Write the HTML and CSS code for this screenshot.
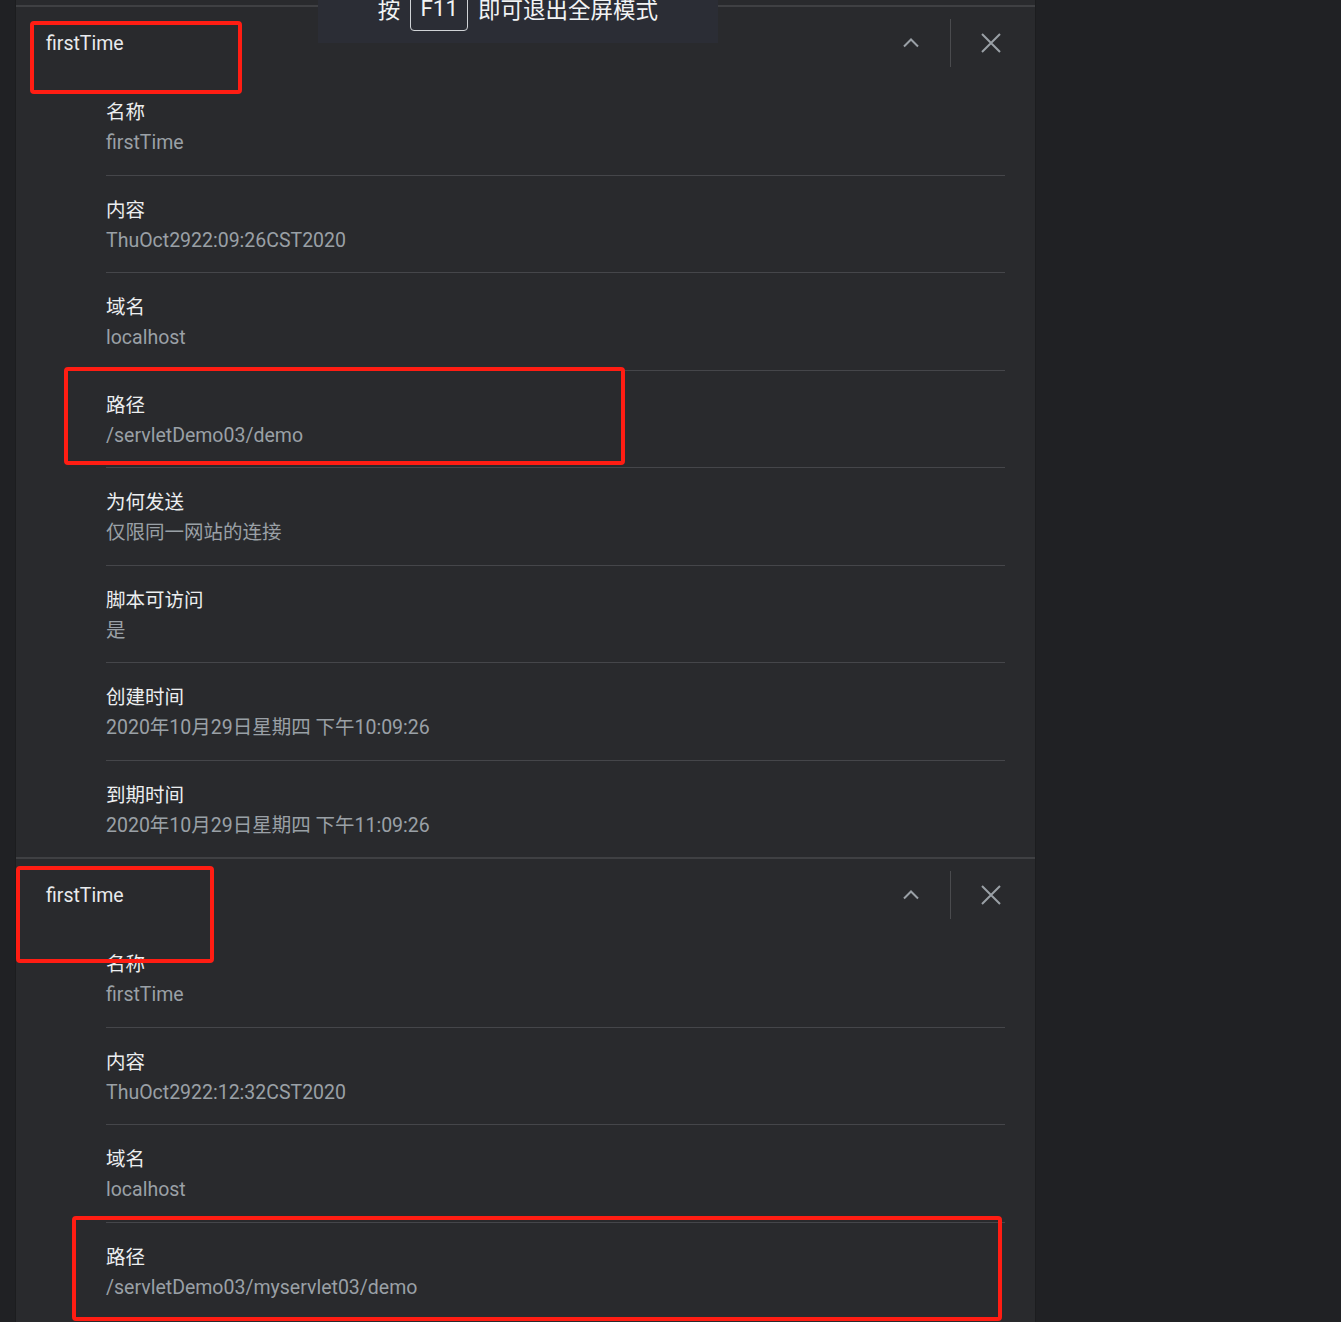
FILE: index.html
```html
<!DOCTYPE html>
<html lang="zh-CN">
<head>
<meta charset="utf-8">
<title>Cookies</title>
<link rel="stylesheet" href="styles.css">
</head>
<body>
<div class="panel">
  <section class="card">
    <div class="card-head">
      <span class="card-title">firstTime</span>
      <button class="icon-btn" aria-label="收起">
        <svg width="16" height="16" viewBox="0 0 16 16"><path d="M1 11.5 L8 4.5 L15 11.5" fill="none" stroke="#9aa0a6" stroke-width="2"/></svg>
      </button>
      <span class="head-divider"></span>
      <button class="icon-btn close" aria-label="删除">
        <svg width="20" height="20" viewBox="0 0 20 20"><path d="M1 1 L19 19 M19 1 L1 19" fill="none" stroke="#9aa0a6" stroke-width="2"/></svg>
      </button>
    </div>
    <div class="row"><div class="label">名称</div><div class="value">firstTime</div></div>
    <div class="row"><div class="label">内容</div><div class="value">ThuOct2922:09:26CST2020</div></div>
    <div class="row"><div class="label">域名</div><div class="value">localhost</div></div>
    <div class="row"><div class="label">路径</div><div class="value">/servletDemo03/demo</div></div>
    <div class="row"><div class="label">为何发送</div><div class="value">仅限同一网站的连接</div></div>
    <div class="row"><div class="label">脚本可访问</div><div class="value">是</div></div>
    <div class="row"><div class="label">创建时间</div><div class="value">2020年10月29日星期四 下午10:09:26</div></div>
    <div class="row"><div class="label">到期时间</div><div class="value">2020年10月29日星期四 下午11:09:26</div></div>
  </section>
  <section class="card">
    <div class="card-head">
      <span class="card-title">firstTime</span>
      <button class="icon-btn" aria-label="收起">
        <svg width="16" height="16" viewBox="0 0 16 16"><path d="M1 11.5 L8 4.5 L15 11.5" fill="none" stroke="#9aa0a6" stroke-width="2"/></svg>
      </button>
      <span class="head-divider"></span>
      <button class="icon-btn close" aria-label="删除">
        <svg width="20" height="20" viewBox="0 0 20 20"><path d="M1 1 L19 19 M19 1 L1 19" fill="none" stroke="#9aa0a6" stroke-width="2"/></svg>
      </button>
    </div>
    <div class="row"><div class="label">名称</div><div class="value">firstTime</div></div>
    <div class="row"><div class="label">内容</div><div class="value">ThuOct2922:12:32CST2020</div></div>
    <div class="row"><div class="label">域名</div><div class="value">localhost</div></div>
    <div class="row"><div class="label">路径</div><div class="value">/servletDemo03/myservlet03/demo</div></div>
  </section>
</div>

<div class="toast">
  <div class="toast-line">
    <span>按</span>
    <span class="kbd">F11</span>
    <span>即可退出全屏模式</span>
  </div>
</div>

<div class="mark mark-1"></div>
<div class="mark mark-2"></div>
<div class="mark mark-3"></div>
<div class="mark mark-4"></div>
</body>
</html>
```

FILE: styles.css
```css
html, body {
  margin: 0;
  height: 1322px;
  overflow: hidden;
}
body {
  background: #202124;
  font-family: Roboto, "Noto Sans CJK SC", sans-serif;
  position: relative;
}
.panel {
  margin-left: 15px;
  width: 1019px;
  min-height: 1322px;
  background: #292a2d;
  border-left: 1px solid #1c1d1f;
  border-right: 1px solid #1c1d1f;
  padding-top: 5px;
  box-sizing: content-box;
}
.card {
  border-top: 2px solid #3f4043;
}
.card-head {
  height: 48px;
  padding: 12px 24px 11px 30px;
  display: flex;
  align-items: center;
}
.card-title {
  flex: 1;
  color: #e8eaed;
  font-size: 19.5px;
}
.icon-btn {
  width: 40px;
  height: 40px;
  border: 0;
  padding: 0;
  background: transparent;
  display: flex;
  align-items: center;
  justify-content: center;
}
.icon-btn.close {
  margin-left: 20px;
}
.head-divider {
  width: 1px;
  height: 48px;
  background: #4a4b4e;
  margin-left: 19px;
}
.row {
  margin: 0 30px 0 90px;
  padding: 20px 0 16.5px;
}
.row:not(:last-child) {
  border-bottom: 1px solid #45464a;
}
.label {
  color: #eceef0;
  font-size: 19.5px;
  line-height: 30px;
}
.value {
  color: #9aa0a6;
  font-size: 19.5px;
  line-height: 30px;
}
.toast {
  position: absolute;
  left: 318px;
  top: 0;
  width: 400px;
  height: 43px;
  background: #2b2d35;
  overflow: hidden;
}
.toast-line {
  margin-top: -15px;
  height: 46px;
  display: flex;
  align-items: center;
  justify-content: center;
  gap: 10px;
  color: #f1f3f4;
  font-size: 22.5px;
}
.kbd {
  height: 44px;
  border: 1px solid #d0d3d6;
  border-radius: 4px;
  padding: 0 9px;
  display: flex;
  align-items: center;
}
.mark {
  position: absolute;
  border: 4px solid #ff1d13;
  border-radius: 4px;
  box-sizing: border-box;
}
.mark-1 { left: 30px; top: 21px; width: 212px; height: 73px; }
.mark-2 { left: 64px; top: 367px; width: 561px; height: 98px; }
.mark-3 { left: 16px; top: 866px; width: 198px; height: 97px; }
.mark-4 { left: 72px; top: 1216px; width: 930px; height: 105px; }
```
